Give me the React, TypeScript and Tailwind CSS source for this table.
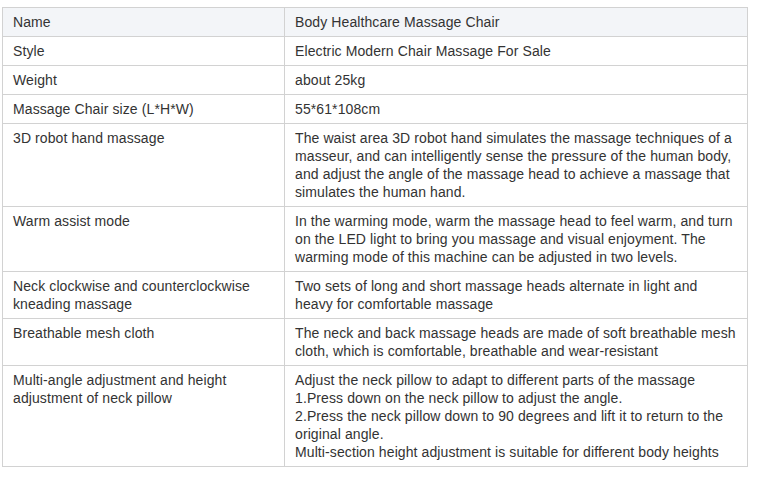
const rows: [string, string[]][] = [
  ["Name", ["Body Healthcare Massage Chair"]],
  ["Style", ["Electric Modern Chair Massage For Sale"]],
  ["Weight", ["about 25kg"]],
  ["Massage Chair size (L*H*W)", ["55*61*108cm"]],
  [
    "3D robot hand massage",
    [
      "The waist area 3D robot hand simulates the massage techniques of a masseur, and can intelligently sense the pressure of the human body, and adjust the angle of the massage head to achieve a massage that simulates the human hand.",
    ],
  ],
  [
    "Warm assist mode",
    [
      "In the warming mode, warm the massage head to feel warm, and turn on the LED light to bring you massage and visual enjoyment. The warming mode of this machine can be adjusted in two levels.",
    ],
  ],
  [
    "Neck clockwise and counterclockwise kneading massage",
    [
      "Two sets of long and short massage heads alternate in light and heavy for comfortable massage",
    ],
  ],
  [
    "Breathable mesh cloth",
    [
      "The neck and back massage heads are made of soft breathable mesh cloth, which is comfortable, breathable and wear-resistant",
    ],
  ],
  [
    "Multi-angle adjustment and height adjustment of neck pillow",
    [
      "Adjust the neck pillow to adapt to different parts of the massage",
      "1.Press down on the neck pillow to adjust the angle.",
      "2.Press the neck pillow down to 90 degrees and lift it to return to the original angle.",
      "Multi-section height adjustment is suitable for different body heights",
    ],
  ],
];

const App = () => {
  return (
    <div className="w-[762px] h-[485px] bg-white pt-[7px] pl-[2px] font-['Liberation_Sans',Arial,sans-serif] text-[14px] leading-[18px] tracking-[0.1px] text-[#333]">
      <table className="w-[746px] table-fixed border-collapse">
        <colgroup>
          <col className="w-[282px]" />
          <col />
        </colgroup>
        <tbody>
          {rows.map(([label, lines], index) => (
            <tr key={index} className={index === 0 ? "bg-[#f3f5f8]" : ""}>
              <td className="border border-[#d2d2d2] px-[10px] py-[5px] align-top">
                {label}
              </td>
              <td className="border border-[#d2d2d2] px-[10px] py-[5px] align-top">
                {lines.map((line, i) => (
                  <div key={i}>{line}</div>
                ))}
              </td>
            </tr>
          ))}
        </tbody>
      </table>
    </div>
  );
};

export default App;
